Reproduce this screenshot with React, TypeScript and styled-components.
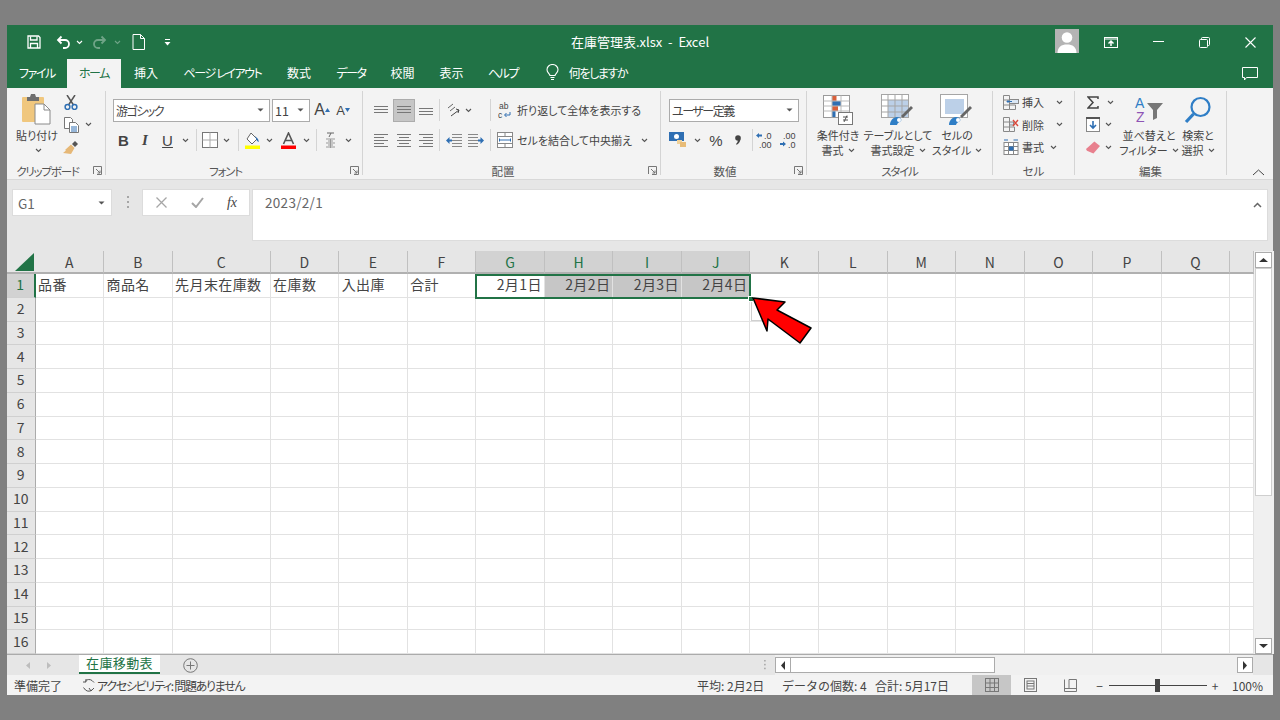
import React from 'react'
import styled, { createGlobalStyle } from 'styled-components'

const green = '#217346'
const JP = `"Noto Sans CJK JP", "Noto Sans", sans-serif`

const Global = createGlobalStyle`
  html, body { margin: 0; padding: 0; background: #808080; height: 100%; overflow: hidden; }
  body { font-family: ${JP}; }
  svg { flex: none; }
`

const Page = styled.div`
  width: 1280px;
  height: 720px;
  padding: 25px 7px;
  box-sizing: border-box;
`
const Window = styled.div`
  height: 670px;
  display: flex;
  flex-direction: column;
  background: #e6e6e6;
`

/* title bar */
const TitleBar = styled.div`
  height: 34px;
  background: ${green};
  display: flex;
  align-items: center;
  color: #fff;
  position: relative;
`
const Qat = styled.div`
  display: flex;
  align-items: center;
  padding-left: 17px;
`
const Slot = styled.div<{ $w: number; $mute?: boolean }>`
  width: ${p => p.$w}px;
  flex: none;
  height: 100%;
  display: flex;
  align-items: center;
  justify-content: center;
  opacity: ${p => (p.$mute ? 0.35 : 1)};
`
const Title = styled.div`
  position: absolute;
  left: 0;
  right: 0;
  top: 8px;
  text-align: center;
  font-size: 13px;
  line-height: 18px;
  white-space: pre;
`
const WinControls = styled.div`
  margin-left: auto;
  display: flex;
  align-items: center;
  height: 100%;
`
const Avatar = styled.div`
  width: 24px;
  height: 24px;
  background: #b4b4b4;
  margin-right: 8px;
  margin-top: -3px;
  overflow: hidden;
`

/* tabs */
const TabRow = styled.div`
  height: 29px;
  background: ${green};
  display: flex;
  align-items: stretch;
  color: #fff;
  font-size: 12px;
  font-feature-settings: "palt";
`
const Tab = styled.div<{ $w: number; $active?: boolean; $kana?: boolean }>`
  width: ${p => p.$w}px;
  flex: none;
  display: flex;
  align-items: center;
  justify-content: center;
  gap: 10px;
  padding-bottom: 2px;
  box-sizing: border-box;
  white-space: nowrap;
  letter-spacing: ${p => (p.$kana ? '-1.4px' : '0')};
  background: ${p => (p.$active ? '#f3f3f3' : 'transparent')};
  color: ${p => (p.$active ? green : '#fff')};
`
const Comment = styled.div`
  margin-left: auto;
  width: 46px;
  display: flex;
  align-items: center;
  justify-content: center;
`

/* ribbon */
const Ribbon = styled.div`
  height: 91px;
  background: #f3f3f3;
  display: flex;
  position: relative;
  color: #444;
  font-feature-settings: "palt";
`
const Group = styled.div<{ $w: number }>`
  width: ${p => p.$w}px;
  flex: none;
  display: flex;
  flex-direction: column;
`
const GroupBody = styled.div<{ $row?: boolean; $pad?: number }>`
  flex: 1;
  min-height: 0;
  display: flex;
  flex-direction: ${p => (p.$row ? 'row' : 'column')};
  padding-left: ${p => p.$pad ?? 0}px;
`
const GroupLabel = styled.div<{ $launch?: boolean; $kana?: boolean }>`
  height: 16px;
  font-size: 11.5px;
  line-height: 16px;
  text-align: center;
  color: #555;
  position: relative;
  white-space: nowrap;
  letter-spacing: ${p => (p.$kana ? '-1.2px' : '0')};
  padding-right: ${p => (p.$launch ? 17 : 0)}px;
`
const Launcher = styled.span`
  position: absolute;
  right: 3px;
  top: 3px;
  display: flex;
`
const Divider = styled.div`
  width: 1px;
  margin: 3px 0 4px;
  background: #d4d4d4;
  flex: none;
`
const TwoRows = styled.div`
  display: flex;
  flex-direction: column;
  padding-top: 11px;
  gap: 8px;
`
const Row = styled.div`
  display: flex;
  height: 22px;
  align-items: center;
`
const Field = styled.div<{ $w: number; $latin?: boolean }>`
  width: ${p => p.$w}px;
  height: 23px;
  box-sizing: border-box;
  background: #fff;
  border: 1px solid #ababab;
  flex: none;
  display: flex;
  align-items: center;
  justify-content: space-between;
  padding: 0 5px 0 2px;
  font-size: ${p => (p.$latin ? 12.5 : 12)}px;
  letter-spacing: ${p => (p.$latin ? '0' : '-1.5px')};
  color: #444;
  margin-right: 2px;
  white-space: nowrap;
`
const Sep = styled.div`
  width: 1px;
  height: 22px;
  background: #d4d4d4;
  flex: none;
`
const Active = styled.div`
  width: 22px;
  height: 23px;
  background: #c6c6c6;
  border: 1px solid #acacac;
  box-sizing: border-box;
  display: flex;
  align-items: center;
  justify-content: center;
`
const BtnText = styled.span<{ $w?: number }>`
  font-size: 11px;
  white-space: nowrap;
  color: #444;
  flex: none;
  width: ${p => (p.$w ? `${p.$w}px` : 'auto')};
`
const Face = styled.span<{ $b?: boolean; $i?: boolean; $u?: boolean; $size?: number; $sans?: boolean }>`
  font-family: ${p => (p.$sans ? '"Liberation Sans", sans-serif' : '"Liberation Serif", serif')};
  font-size: ${p => p.$size ?? 15}px;
  font-weight: ${p => (p.$b ? 700 : 400)};
  font-style: ${p => (p.$i ? 'italic' : 'normal')};
  text-decoration: ${p => (p.$u ? 'underline' : 'none')};
  color: #444;
`
const BigBtn = styled.div<{ $w: number }>`
  width: ${p => p.$w}px;
  flex: none;
  display: flex;
  flex-direction: column;
  align-items: center;
  padding-top: 5px;
  font-size: 11px;
  line-height: 15px;
  color: #444;
  text-align: center;
  white-space: nowrap;
`
const BigIcon = styled.div`
  height: 33px;
  margin-bottom: 2px;
  display: flex;
  align-items: center;
  justify-content: center;
`
const SecondLine = styled.span`
  height: 15px;
  display: inline-flex;
  align-items: center;
  gap: 4px;
`
const ChevLine = styled.span`
  height: 14px;
  display: flex;
  align-items: center;
  padding-left: 3px;
`
const SmallCol = styled.div`
  display: flex;
  flex-direction: column;
  padding-top: 3px;
`
const SmallRow = styled.div`
  display: flex;
  align-items: center;
  height: 22.5px;
`
const Collapse = styled.div`
  position: absolute;
  right: 8px;
  bottom: 3px;
  display: flex;
`

/* formula bar */
const FormulaBar = styled.div`
  height: 72px;
  box-sizing: border-box;
  padding: 9px 5px 10px 5px;
  display: flex;
  align-items: flex-start;
  background: #e6e6e6;
  border-top: 1px solid #d8d8d8;
`
const NameBox = styled.div`
  width: 100px;
  height: 27px;
  box-sizing: border-box;
  background: #fff;
  border: 1px solid #dcdcdc;
  display: flex;
  align-items: center;
  justify-content: space-between;
  padding: 0 6px 0 5px;
  font-size: 13.5px;
  color: #666;
`
const Dots = styled.div`
  width: 30px;
  height: 27px;
  display: flex;
  align-items: center;
  justify-content: center;
`
const FxBox = styled.div`
  width: 108px;
  height: 27px;
  box-sizing: border-box;
  background: #fff;
  border: 1px solid #dcdcdc;
  display: flex;
  margin-right: 2px;
`
const FormulaInput = styled.div`
  flex: 1;
  height: 52px;
  box-sizing: border-box;
  background: #fff;
  border: 1px solid #dcdcdc;
  padding: 3px 5px 0 12px;
  font-size: 13.5px;
  line-height: 18px;
  color: #666;
  display: flex;
  justify-content: space-between;
  letter-spacing: 0.3px;
`

/* sheet */
const SheetArea = styled.div`
  height: 403px;
  display: flex;
  background: #e6e6e6;
`
const GridWrap = styled.div`
  position: relative;
  width: 1247px;
  flex: none;
`
const Grid = styled.div`
  display: grid;
  grid-template-columns: 28.5px 68.56px 68.56px 98px repeat(14, 68.56px) 1fr;
  grid-template-rows: 23px repeat(16, 23.75px);
  background: #fff;
  font-size: 14px;
  color: #444;
`
const Corner = styled.div`
  background: #e6e6e6;
  border-bottom: 2px solid #b0b0b0;
  box-sizing: border-box;
  display: flex;
  align-items: flex-end;
  justify-content: flex-end;
  padding: 0 2px 1px 0;
`
const ColHead = styled.div<{ $sel?: boolean }>`
  background: ${p => (p.$sel ? '#d2d2d2' : '#e6e6e6')};
  color: ${p => (p.$sel ? green : '#444')};
  border-right: 1px solid #c0c0c0;
  border-bottom: 2px solid #b0b0b0;
  box-sizing: border-box;
  display: flex;
  align-items: center;
  justify-content: center;
  font-size: 14px;
`
const RowHead = styled.div<{ $sel?: boolean }>`
  background: ${p => (p.$sel ? '#d2d2d2' : '#e6e6e6')};
  color: ${p => (p.$sel ? green : '#444')};
  border-right: ${p => (p.$sel ? `2px solid ${green}` : '1px solid #ababab')};
  border-bottom: 1px solid #d0d0d0;
  box-sizing: border-box;
  display: flex;
  align-items: center;
  justify-content: center;
  font-size: 14px;
  padding-bottom: 2px;
`
const Cell = styled.div<{ $sel?: boolean; $right?: boolean }>`
  background: ${p => (p.$sel ? '#c6c6c6' : '#fff')};
  border-right: 1px solid #e2e2e2;
  border-bottom: 1px solid #e2e2e2;
  box-sizing: border-box;
  display: flex;
  align-items: center;
  justify-content: ${p => (p.$right ? 'flex-end' : 'flex-start')};
  padding: 0 2px 2px 2.5px;
  white-space: nowrap;
  letter-spacing: 0.4px;
  overflow: visible;
`
const Selection = styled.div`
  position: absolute;
  left: 468px;
  top: 23px;
  width: 276px;
  height: 25px;
  border: 2px solid ${green};
  box-sizing: border-box;
  pointer-events: none;
`
const Handle = styled.div`
  position: absolute;
  left: 741px;
  top: 45px;
  width: 6px;
  height: 6px;
  background: ${green};
  border: 1px solid #fff;
  box-sizing: border-box;
`
const QuickBtn = styled.div`
  position: absolute;
  left: 744px;
  top: 50px;
  width: 15px;
  height: 20px;
  background: #fff;
  border: 1px solid #d0d0d0;
  box-sizing: border-box;
`
const Arrow = styled.svg`
  position: absolute;
  left: 743px;
  top: 45px;
`
const VScroll = styled.div`
  flex: 1;
  display: flex;
  flex-direction: column;
  align-items: center;
  padding: 1px 2px 0 1px;
  background: #f0f0f0;
`
const ScrollBtn = styled.div<{ $w?: number; $h?: number }>`
  width: ${p => p.$w ?? 17}px;
  height: ${p => p.$h ?? 16}px;
  flex: none;
  background: #fff;
  border: 1px solid #ababab;
  box-sizing: border-box;
  display: flex;
  align-items: center;
  justify-content: center;
`
const VThumb = styled.div`
  width: 17px;
  height: 228px;
  flex: none;
  background: #fff;
  border: 1px solid #cfcfcf;
  box-sizing: border-box;
`
const VTrack = styled.div`
  flex: 1;
`

/* sheet tabs */
const TabBar = styled.div`
  height: 21px;
  background: #e6e6e6;
  display: flex;
  align-items: stretch;
  border-top: 1px solid #ababab;
  box-sizing: border-box;
`
const SheetTab = styled.div`
  width: 81px;
  height: 19px;
  flex: none;
  background: #fff;
  border-bottom: 2px solid ${green};
  box-sizing: border-box;
  color: ${green};
  font-size: 13px;
  line-height: 16px;
  text-align: center;
  letter-spacing: 0.4px;
`
const HScroll = styled.div`
  display: flex;
  align-items: center;
  width: 478px;
  flex: none;
  background: #f0f0f0;
  height: 100%;
`
const HThumb = styled.div`
  width: 204px;
  height: 16px;
  flex: none;
  background: #fff;
  border: 1px solid #ababab;
  border-left: none;
  box-sizing: border-box;
`
const HTrack = styled.div`
  flex: 1;
`

/* status bar */
const StatusBar = styled.div`
  height: 20px;
  background: #f3f3f3;
  display: flex;
  align-items: center;
  font-size: 12px;
  color: #444;
  white-space: nowrap;
`
const StatusText = styled.span<{ $w: number; $kana?: boolean }>`
  width: ${p => p.$w}px;
  flex: none;
  display: flex;
  align-items: center;
  font-feature-settings: ${p => (p.$kana ? '"palt"' : 'normal')};
  letter-spacing: ${p => (p.$kana ? '-1.3px' : '0')};
`
const ViewBtn = styled.div<{ $w: number; $active?: boolean }>`
  width: ${p => p.$w}px;
  height: 100%;
  flex: none;
  display: flex;
  align-items: center;
  justify-content: center;
  background: ${p => (p.$active ? '#c6c6c6' : 'transparent')};
`
const Slider = styled.div`
  width: 98px;
  height: 1px;
  background: #444;
  position: relative;
  flex: none;
`
const SliderThumb = styled.div`
  position: absolute;
  left: 46px;
  top: -6px;
  width: 5px;
  height: 13px;
  background: #444;
`

/* icons */
type IP = { c?: string; s?: number }
const Chev = ({ c = '#555' }: IP) => (
  <svg width="7" height="5" viewBox="0 0 7 5"><path d="M1 1l2.500 2.500L6 1" fill="none" stroke={c} strokeWidth="1.100" /></svg>
)
const Caret = ({ c = '#555' }: IP) => (
  <svg width="7" height="4" viewBox="0 0 7 4"><path d="M0.500 0.500h6L3.500 3.500z" fill={c} /></svg>
)
const LaunchIcon = () => (
  <svg width="9" height="9" viewBox="0 0 9 9" fill="none" stroke="#777"><path d="M.5 8V.5H8.500V8.500H4" /><path d="M3 3l4 4M7 4.500V7H4.500" /></svg>
)
const SaveIcon = () => (
  <svg width="14" height="14" viewBox="0 0 14 14" fill="none" stroke="#fff" strokeWidth="1.300"><path d="M1 1h10.500L13 2.500V13H1z" /><path d="M3.500 1.500v3.500h6.500V1.500M3.500 13V8.500h7V13" /></svg>
)
const UndoIcon = () => (
  <svg width="15" height="14" viewBox="0 0 15 14" fill="none" stroke="#fff" strokeWidth="1.800"><path d="M5.500 1.500L2 5l3.500 3.500" /><path d="M2.500 5H9a4 4 0 0 1 0 8H7" /></svg>
)
const RedoIcon = () => (
  <svg width="15" height="14" viewBox="0 0 15 14" fill="none" stroke="#fff" strokeWidth="1.800"><path d="M9.500 1.500L13 5 9.500 8.500" /><path d="M12.500 5H6a4 4 0 0 0 0 8h2" /></svg>
)
const NewIcon = () => (
  <svg width="13" height="16" viewBox="0 0 13 16" fill="none" stroke="#fff"><path d="M1 .5h7.500l4 4v11H1z" /><path d="M8.500.5v4h4" /></svg>
)
const QatMore = () => (
  <svg width="7" height="7" viewBox="0 0 7 7" fill="#fff"><rect x="1" width="5" height="1" /><path d="M.5 3h6L3.500 6.500z" /></svg>
)
const UserIcon = () => (
  <svg width="24" height="24" viewBox="0 0 24 24" fill="#fff"><circle cx="12" cy="8.500" r="5.300" /><path d="M2.500 24c0-6 4-8.500 9.500-8.500s9.500 2.500 9.500 8.500z" /></svg>
)
const DisplayIcon = () => (
  <svg width="14" height="11" viewBox="0 0 14 11" fill="none" stroke="#fff"><rect x=".5" y=".5" width="13" height="10" /><path d="M.5 2h13" /><path d="M7 9V4.500M4.500 6.500L7 4l2.500 2.500" strokeWidth="1.500" /></svg>
)
const MinIcon = () => (
  <svg width="11" height="2" viewBox="0 0 11 2"><rect width="11" height="1" fill="#fff" /></svg>
)
const RestoreIcon = () => (
  <svg width="11" height="11" viewBox="0 0 11 11" fill="none" stroke="#fff"><rect x=".5" y="2.500" width="8" height="8" rx="1" /><path d="M2.500 2.500V1.500a1 1 0 0 1 1-1h6a1 1 0 0 1 1 1v6a1 1 0 0 1-1 1h-1" /></svg>
)
const CloseIcon = () => (
  <svg width="11" height="11" viewBox="0 0 11 11" stroke="#fff" strokeWidth="1.100"><path d="M.5.5l10 10M10.500.5l-10 10" /></svg>
)
const BulbIcon = () => (
  <svg width="13" height="17" viewBox="0 0 13 17" fill="none" stroke="#fff" strokeWidth="1.100"><path d="M4 11.500C3.500 9.500 1 8.500 1 5.700a5.500 5.200 0 0 1 11 0c0 2.800-2.500 3.800-3 5.800z" /><path d="M4.500 13.500h4M5 15.500h3" /></svg>
)
const CommentIcon = () => (
  <svg width="16" height="14" viewBox="0 0 16 14" fill="none" stroke="#fff"><path d="M.5.500h15v10h-11l-2 2.500v-2.500h-2z" /></svg>
)
const PasteIcon = () => (
  <svg width="30" height="31" viewBox="0 0 30 31">
    <rect x="0" y="3" width="22" height="25" rx="1" fill="#f0c77e" />
    <path d="M5 3h3l1-3h4l1 3h3v4H5z" fill="#6f6f6f" />
    <path d="M13 10h9l6 6v14H13z" fill="#fff" stroke="#8a8a8a" />
    <path d="M22 10v6h6" fill="none" stroke="#8a8a8a" />
  </svg>
)
const ScissorsIcon = () => (
  <svg width="14" height="15" viewBox="0 0 14 15" fill="none">
    <path d="M3 0l6.500 10M11 0L4.500 10" stroke="#555" strokeWidth="1.500" />
    <circle cx="3.500" cy="12" r="2.400" stroke="#2f6fb3" strokeWidth="1.500" />
    <circle cx="10.500" cy="12" r="2.400" stroke="#2f6fb3" strokeWidth="1.500" />
  </svg>
)
const CopyIcon = () => (
  <svg width="15" height="16" viewBox="0 0 15 16" fill="#fff" stroke="#777">
    <path d="M.5.500h6l2 2v9h-8z" />
    <path d="M5.500 5.500h6l3 3v7h-9z" />
    <path d="M7 10h6M7 12h6M7 14h6" stroke="#2f6fb3" />
  </svg>
)
const BrushIcon = () => (
  <svg width="16" height="15" viewBox="0 0 16 15">
    <path d="M12 1l3 3-3 3-3-3z" fill="#555" />
    <path d="M8 4.500l3.500 3.500L8 14 0 13l3-2.500-1-.5z" fill="#e6b877" />
  </svg>
)
const BorderIcon = () => (
  <svg width="16" height="16" viewBox="0 0 16 16" fill="#fff" stroke="#777"><rect x=".5" y=".5" width="15" height="15" /><path d="M8 .5v15M.5 8h15" stroke="#aaa" /></svg>
)
const FillIcon = () => (
  <svg width="17" height="17" viewBox="0 0 17 17">
    <path d="M7 1l6 6-5 5-5-5z" fill="#fff" stroke="#666" />
    <path d="M11 4l3 3 1 3-2-1z" fill="#2f6fb3" />
    <rect x="1" y="13.500" width="15" height="3.500" fill="#ffff00" />
  </svg>
)
const FontColorIcon = () => (
  <svg width="17" height="17" viewBox="0 0 17 17">
    <path d="M3.500 12L8.500 1l5 11M5.500 8.500h6" fill="none" stroke="#555" strokeWidth="1.600" />
    <rect x="1" y="13.500" width="15" height="3.500" fill="#f00" />
  </svg>
)
const PhoneticIcon = () => (
  <svg width="11" height="17" viewBox="0 0 11 17" fill="none" stroke="#666">
    <path d="M2 1h7M6 1L4 5" /><path d="M1 7h9M1 11h9M1 15h9M3 9h5M3 13h5M5.500 7v9" stroke="#999" />
  </svg>
)
const Lines = ({ rows, w = 14 }: { rows: number[]; w?: number }) => (
  <svg width={w} height={Math.max(...rows) + 2} viewBox={`0 0 ${w} ${Math.max(...rows) + 2}`} stroke="#777">
    {rows.map(y => <path key={y} d={`M0 ${y + 0.5}h${w}`} />)}
  </svg>
)
const AlignLines = ({ inset = 'left' }: { inset?: 'left' | 'center' | 'right' }) => {
  const short = inset === 'left' ? 'M0 4.500h10M0 10.500h10' : inset === 'right' ? 'M4 4.500h10M4 10.500h10' : 'M2 4.500h10M2 10.500h10'
  return (
    <svg width="14" height="14" viewBox="0 0 14 14" stroke="#777"><path d="M0 1.500h14M0 7.500h14M0 13.500h14" /><path d={short} /></svg>
  )
}
const OrientIcon = () => (
  <svg width="14" height="14" viewBox="0 0 14 14" fill="none" stroke="#666"><path d="M1 5l5-4M3 8l5-4" /><path d="M4 13l8-6M9 6l3 1-1 3" stroke="#444" /></svg>
)
const IndentIcon = ({ dir }: { dir: 'in' | 'out' }) => (
  <svg width="16" height="14" viewBox="0 0 16 14">
    <path d={dir === 'out' ? 'M6 1.500h10M6 4.500h10M6 7.500h10M6 10.500h10M6 13.500h10' : 'M0 1.500h10M0 4.500h10M0 7.500h10M0 10.500h10M0 13.500h10'} stroke="#888" />
    <path d={dir === 'out' ? 'M0 7.500L3.500 4v2.500H6v2H3.500V11z' : 'M16 7.500L12.500 4v2.500H10v2h2.500V11z'} fill="#2f6fb3" />
  </svg>
)
const WrapIcon = () => (
  <svg width="14" height="17" viewBox="0 0 14 17">
    <text x="1" y="7" fontSize="8.500" fontFamily="Liberation Sans" fill="#444">ab</text>
    <text x="0" y="15.500" fontSize="8.500" fontFamily="Liberation Sans" fill="#444">c</text>
    <path d="M12 10v3H7M8.500 11L6.500 13l2 2" fill="none" stroke="#2f6fb3" />
  </svg>
)
const MergeIcon = () => (
  <svg width="16" height="16" viewBox="0 0 16 16" fill="#fff" stroke="#888">
    <rect x=".5" y=".5" width="15" height="15" />
    <path d="M.5 4.500h15M.5 11.500h15M8 .5v4M8 11.500v4" />
    <path d="M3 8h10" stroke="#2f6fb3" />
    <path d="M2.500 6.500v3M13.500 6.500v3" stroke="#2f6fb3" />
  </svg>
)
const CurrencyIcon = () => (
  <svg width="18" height="16" viewBox="0 0 18 16">
    <rect x="0" y="0" width="15" height="9" fill="#2f6fb3" />
    <circle cx="7.500" cy="4.500" r="2.500" fill="#fff" />
    <rect x="8" y="8" width="5" height="4" fill="#f0d29a" />
    <rect x="11" y="10" width="6" height="5" fill="#e8bc78" />
  </svg>
)
const CommaIcon = () => (
  <svg width="6" height="10" viewBox="0 0 6 10"><circle cx="3" cy="3" r="2.800" fill="#444" /><path d="M5.500 3.500C5.500 6.500 3.500 9 1.500 9.800L1 9c1-.8 1.800-2 1.800-3.500z" fill="#444" /></svg>
)
const DecIcon = ({ more }: { more?: boolean }) => (
  <svg width="20" height="17" viewBox="0 0 20 17" fontFamily="Liberation Sans" fontSize="9" fill="#444">
    {more ? (
      <>
        <path d="M0 3.500L3 1v1.500h3v2H3V6z" fill="#2f6fb3" />
        <text x="8" y="7">.0</text>
        <text x="3" y="15.500">.00</text>
      </>
    ) : (
      <>
        <text x="4" y="7">.00</text>
        <path d="M7 12L4 9.500V11H1v2h3v1.500z" fill="#2f6fb3" />
        <text x="9" y="15.500">.0</text>
      </>
    )}
  </svg>
)
const CondIcon = () => (
  <svg width="30" height="30" viewBox="0 0 30 30">
    <g fill="#fff" stroke="#9a9a9a"><rect x=".5" y=".5" width="26" height="22" /></g>
    <rect x="9" y="1" width="4.500" height="5" fill="#d9603b" />
    <rect x="9" y="6" width="9" height="5" fill="#2f6fb3" />
    <rect x="9" y="11" width="6" height="5" fill="#d9603b" />
    <rect x="9" y="16" width="3.500" height="6" fill="#2f6fb3" />
    <path d="M.5 6h26M.5 11h26M.5 16h26M9 .5v22M18 .5v22" stroke="#bbb" fill="none" />
    <rect x="15.500" y="17.500" width="14" height="12" fill="#fff" stroke="#777" />
    <path d="M20 22h5M20 25h5M24 20.500l-3 6.500" stroke="#555" fill="none" />
  </svg>
)
const StyleBrush = () => (
  <>
    <path d="M20 22L30 12l2 2-10 10z" fill="#666" />
    <path d="M9 31c0-4 3-8 7-8s5 3 4 4-3 1-4 4z" fill="#2f7ec6" />
    <circle cx="18" cy="26" r="2" fill="#fff" />
  </>
)
const TableIcon = () => (
  <svg width="34" height="32" viewBox="0 0 34 32">
    <rect x=".5" y=".5" width="27" height="23" fill="#fff" stroke="#a5a5a5" />
    <rect x="7" y="6" width="20" height="17" fill="#bcd0e8" />
    <path d="M.5 6h27M.5 12h27M.5 18h27M7 .5v23M14 .5v23M21 .5v23" stroke="#a5a5a5" fill="none" />
    <StyleBrush />
  </svg>
)
const CellStyleIcon = () => (
  <svg width="34" height="32" viewBox="0 0 34 32">
    <rect x=".5" y=".5" width="27" height="23" fill="#fff" stroke="#a5a5a5" />
    <rect x="5" y="5" width="19" height="15" fill="#bcd0e8" />
    <StyleBrush />
  </svg>
)
const CellInsert = () => (
  <svg width="16" height="15" viewBox="0 0 16 15" fill="none" stroke="#888">
    <path d="M.5.5h6v14h-6zM.5 5h6M.5 10h6M6.500 10h6v4.500h-6" />
    <rect x="6.500" y="4.500" width="9" height="4" fill="#dbe7f4" />
    <path d="M9 6.500H4M5.500 5L4 6.500 5.500 8" stroke="#2f6fb3" />
  </svg>
)
const CellDelete = () => (
  <svg width="16" height="15" viewBox="0 0 16 15" fill="none" stroke="#888">
    <path d="M.5.5h6v14h-6zM.5 5h6M.5 10h6M6.500 10h5v4.500h-5" />
    <rect x="6.500" y="5" width="4" height="3" fill="#dbe7f4" />
    <path d="M10 3l5 6M15 3l-5 6" stroke="#d9483b" strokeWidth="1.400" />
  </svg>
)
const CellFormat = () => (
  <svg width="16" height="16" viewBox="0 0 16 16" fill="none" stroke="#888">
    <rect x="1" y="3.500" width="14" height="12" fill="#fff" />
    <path d="M1 7.500h14M1 11.500h14M5.500 3.500v12M10.500 3.500v12" />
    <rect x="6" y="7.500" width="4.500" height="4" fill="#2f6fb3" stroke="none" />
    <path d="M1 1h4M10.500 1H15" stroke="#2f6fb3" />
  </svg>
)
const SigmaIcon = () => (
  <svg width="12" height="13" viewBox="0 0 12 13"><path d="M11 3V1H1l5 5.500L1 12h10v-2" fill="none" stroke="#444" strokeWidth="1.500" /></svg>
)
const FillDown = () => (
  <svg width="14" height="15" viewBox="0 0 14 15">
    <rect x=".5" y=".5" width="13" height="14" fill="#fff" stroke="#888" />
    <rect x="0" y="0" width="14" height="2" fill="#555" />
    <path d="M7 4v7M4 8l3 3 3-3" fill="none" stroke="#2f6fb3" strokeWidth="1.600" />
  </svg>
)
const EraserIcon = () => (
  <svg width="14" height="13" viewBox="0 0 15 13"><path d="M9 0l6 5-7 8-7-3-1-2z" fill="#e8808e" /></svg>
)
const SortIcon = () => (
  <svg width="29" height="27" viewBox="0 0 29 27" fontFamily="Liberation Sans" fontSize="14" overflow="visible">
    <text x="0" y="12" fill="#2f7ec6">A</text>
    <text x="1" y="26" fill="#8e54b5">Z</text>
    <path d="M12 7h16l-6 7v8l-4 2V14z" fill="#777" />
  </svg>
)
const FindIcon = () => (
  <svg width="28" height="28" viewBox="0 0 28 28" fill="none" stroke="#2f7ec6">
    <circle cx="16.500" cy="11" r="9" strokeWidth="2.200" />
    <path d="M9.500 18L2 26" strokeWidth="3.200" />
  </svg>
)
const CollapseIcon = () => (
  <svg width="13" height="7" viewBox="0 0 13 7"><path d="M1 6l5.500-5L12 6" fill="none" stroke="#444" /></svg>
)
const CrossIcon = () => (
  <svg width="11" height="11" viewBox="0 0 11 11" stroke="#a6a6a6" strokeWidth="1.300"><path d="M.5.5l10 10M10.500.5l-10 10" /></svg>
)
const CheckIcon = () => (
  <svg width="13" height="11" viewBox="0 0 13 11" fill="none" stroke="#a6a6a6" strokeWidth="2"><path d="M1 6l4 4 7-9" /></svg>
)
const VDots = ({ s = 13 }: IP) => (
  <svg width="3" height={s} viewBox="0 0 3 13" fill="#a6a6a6"><rect x="1" width="2" height="2" /><rect x="1" y="5" width="2" height="2" /><rect x="1" y="10" width="2" height="2" /></svg>
)
const ScrollTri = ({ d }: { d: 'up' | 'down' | 'left' | 'right' }) => {
  const paths = { up: 'M0 5h9L4.500 1z', down: 'M0 1h9L4.500 5z', left: 'M5 0v9L1 4.500z', right: 'M1 0v9l4-4.500z' }
  const v = d === 'up' || d === 'down'
  return (
    <svg width={v ? 9 : 6} height={v ? 6 : 9} viewBox={v ? '0 0 9 6' : '0 0 6 9'}><path d={paths[d]} fill="#333" /></svg>
  )
}
const SmallTri = ({ right }: { right?: boolean }) => (
  <svg width="5" height="7" viewBox="0 0 5 7"><path d={right ? 'M1 0v7l4-3.500z' : 'M4 0v7L0 3.500z'} fill="#bdbdbd" /></svg>
)
const PlusCircle = () => (
  <svg width="15" height="15" viewBox="0 0 15 15" fill="none" stroke="#777"><circle cx="7.500" cy="7.500" r="6.800" /><path d="M7.500 3.500v8M3.500 7.500h8" /></svg>
)
const AccessIcon = () => (
  <svg width="15" height="15" viewBox="0 0 15 15" fill="none" stroke="#555"><path d="M4 3.500a5 5 0 0 1 7-1l2 2M11.500 11.500a5 5 0 0 1-7 .5l-2-2.500" /><path d="M5 1v3H2M8 10l2 3 3-3" /></svg>
)
const NormalView = () => (
  <svg width="14" height="14" viewBox="0 0 14 14" fill="none" stroke="#777"><rect x=".5" y=".5" width="13" height="13" /><path d="M5 .5v13M9.500.5v13M.5 5h13M.5 9.500h13" /></svg>
)
const PageView = () => (
  <svg width="13" height="14" viewBox="0 0 13 14" fill="none" stroke="#777"><rect x=".5" y=".5" width="12" height="13" /><rect x="3" y="3" width="7" height="8" /><path d="M3 5.500h7M3 8h7" /></svg>
)
const BreakView = () => (
  <svg width="13" height="13" viewBox="0 0 13 13" fill="none" stroke="#777"><path d="M.5.500v12h12V.500M.5 9.500h12M5 .5v9M5 .5h7.500" /></svg>
)

const cols = ['A', 'B', 'C', 'D', 'E', 'F', 'G', 'H', 'I', 'J', 'K', 'L', 'M', 'N', 'O', 'P', 'Q', '']
const firstRow: Record<string, string> = {
  A: '品番', B: '商品名', C: '先月末在庫数', D: '在庫数', E: '入出庫', F: '合計',
  G: '2月1日', H: '2月2日', I: '2月3日', J: '2月4日',
}
const selectedCols = ['G', 'H', 'I', 'J']
const rows = Array.from({ length: 16 }, (_, i) => i + 1)

const Sheet = () => (
  <GridWrap>
    <Grid>
      <Corner>
        <svg width="19" height="18" viewBox="0 0 19 18"><path d="M19 0v18H0z" fill={green} /></svg>
      </Corner>
      {cols.map(c => <ColHead key={c} $sel={selectedCols.includes(c)}>{c}</ColHead>)}
      {rows.map(r => (
        <React.Fragment key={r}>
          <RowHead $sel={r === 1}>{r}</RowHead>
          {cols.map(c => (
            <Cell
              key={c}
              $sel={r === 1 && ['H', 'I', 'J'].includes(c)}
              $right={r === 1 && selectedCols.includes(c)}
            >
              {r === 1 ? firstRow[c] : ''}
            </Cell>
          ))}
        </React.Fragment>
      ))}
    </Grid>
    <QuickBtn />
    <Selection />
    <Handle />
    <Arrow width="70" height="52" viewBox="0 0 70 52">
      <path d="M3 2L35 6 27 14 61 32 50 47 18 23 17 35z" fill="#f00" stroke="#000" strokeWidth="1.500" strokeLinejoin="round" />
    </Arrow>
  </GridWrap>
)

const App = () => (
  <Page>
    <Global />
    <Window>
      <TitleBar>
        <Title>{'在庫管理表.xlsx  -  Excel'}</Title>
        <Qat>
          <Slot $w={20}><SaveIcon /></Slot>
          <Slot $w={12} />
          <Slot $w={14}><UndoIcon /></Slot>
          <Slot $w={18}><Chev c="#fff" /></Slot>
          <Slot $w={22} $mute><RedoIcon /></Slot>
          <Slot $w={14} $mute><Chev c="#fff" /></Slot>
          <Slot $w={28}><NewIcon /></Slot>
          <Slot $w={30}><QatMore /></Slot>
        </Qat>
        <WinControls>
          <Avatar><UserIcon /></Avatar>
          <Slot $w={48}><DisplayIcon /></Slot>
          <Slot $w={46}><MinIcon /></Slot>
          <Slot $w={46}><RestoreIcon /></Slot>
          <Slot $w={46}><CloseIcon /></Slot>
        </WinControls>
      </TitleBar>

      <TabRow>
        <Tab $w={60} $kana>ファイル</Tab>
        <Tab $w={54} $active $kana>ホーム</Tab>
        <Tab $w={50}>挿入</Tab>
        <Tab $w={103} $kana>ページ レイアウト</Tab>
        <Tab $w={50}>数式</Tab>
        <Tab $w={54} $kana>データ</Tab>
        <Tab $w={49}>校閲</Tab>
        <Tab $w={49}>表示</Tab>
        <Tab $w={54} $kana>ヘルプ</Tab>
        <Tab $w={113} $kana><BulbIcon />何をしますか</Tab>
        <Comment><CommentIcon /></Comment>
      </TabRow>

      <Ribbon>
        <Group $w={98}>
          <GroupBody $row>
            <BigBtn $w={60}>
              <BigIcon><PasteIcon /></BigIcon>
              貼り付け
              <ChevLine><Chev /></ChevLine>
            </BigBtn>
            <SmallCol>
              <SmallRow><Slot $w={8}><ScissorsIcon /></Slot></SmallRow>
              <SmallRow><Slot $w={8}><CopyIcon /></Slot><Slot $w={26}><Chev /></Slot></SmallRow>
              <SmallRow><Slot $w={8}><BrushIcon /></Slot></SmallRow>
            </SmallCol>
          </GroupBody>
          <GroupLabel $launch $kana>クリップボード<Launcher><LaunchIcon /></Launcher></GroupLabel>
        </Group>
        <Divider />
        <Group $w={256}>
          <GroupBody $pad={7}>
            <TwoRows>
              <Row>
                <Field $w={157}>游ゴシック<Caret /></Field>
                <Field $w={38} $latin>11<Caret /></Field>
                <Slot $w={20}><Face $size={16} $sans>A</Face><svg width="5" height="4"><path d="M0 4h5L2.500 0z" fill="#2f6fb3" /></svg></Slot>
                <Slot $w={22}><Face $size={13} $sans>A</Face><svg width="5" height="4"><path d="M0 0h5L2.500 4z" fill="#2f6fb3" /></svg></Slot>
              </Row>
              <Row>
                <Slot $w={21}><Face $b $sans>B</Face></Slot>
                <Slot $w={22}><Face $i $b>I</Face></Slot>
                <Slot $w={23}><Face $u $sans>U</Face></Slot>
                <Slot $w={13}><Chev /></Slot>
                <Slot $w={8}><Sep /></Slot>
                <Slot $w={19}><BorderIcon /></Slot>
                <Slot $w={15}><Chev /></Slot>
                <Slot $w={8}><Sep /></Slot>
                <Slot $w={20}><FillIcon /></Slot>
                <Slot $w={14}><Chev /></Slot>
                <Slot $w={24}><FontColorIcon /></Slot>
                <Slot $w={12}><Chev /></Slot>
                <Slot $w={8}><Sep /></Slot>
                <Slot $w={20}><PhoneticIcon /></Slot>
                <Slot $w={16}><Chev /></Slot>
              </Row>
            </TwoRows>
          </GroupBody>
          <GroupLabel $launch $kana>フォント<Launcher><LaunchIcon /></Launcher></GroupLabel>
        </Group>
        <Divider />
        <Group $w={297}>
          <GroupBody $pad={6}>
            <TwoRows>
              <Row>
                <Slot $w={24}><Lines rows={[0, 3, 6]} /></Slot>
                <Active><Lines rows={[0, 3, 6]} /></Active>
                <Slot $w={22}><Lines rows={[4, 7, 10]} /></Slot>
                <Slot $w={4}><Sep /></Slot>
                <Slot $w={25}><OrientIcon /></Slot>
                <Slot $w={4}><Chev /></Slot>
                <Slot $w={20} />
                <Sep />
                <Slot $w={7} />
                <Slot $w={14}><WrapIcon /></Slot>
                <Slot $w={5} />
                <BtnText $w={126}>折り返して全体を表示する</BtnText>
              </Row>
              <Row>
                <Slot $w={24}><AlignLines /></Slot>
                <Slot $w={22}><AlignLines inset="center" /></Slot>
                <Slot $w={22}><AlignLines inset="right" /></Slot>
                <Slot $w={4}><Sep /></Slot>
                <Slot $w={25}><IndentIcon dir="out" /></Slot>
                <Slot $w={19}><IndentIcon dir="in" /></Slot>
                <Slot $w={5} />
                <Sep />
                <Slot $w={7} />
                <Slot $w={14}><MergeIcon /></Slot>
                <Slot $w={5} />
                <BtnText $w={117}>セルを結合して中央揃え</BtnText>
                <Slot $w={20}><Chev /></Slot>
              </Row>
            </TwoRows>
          </GroupBody>
          <GroupLabel $launch>配置<Launcher><LaunchIcon /></Launcher></GroupLabel>
        </Group>
        <Divider />
        <Group $w={145}>
          <GroupBody $pad={8}>
            <TwoRows>
              <Row><Field $w={130}>ユーザー定義<Caret /></Field></Row>
              <Row>
                <Slot $w={18}><CurrencyIcon /></Slot>
                <Slot $w={20}><Chev /></Slot>
                <Slot $w={18}><Face $size={15} $sans>%</Face></Slot>
                <Slot $w={26}><CommaIcon /></Slot>
                <Slot $w={3}><Sep /></Slot>
                <Slot $w={24}><DecIcon more /></Slot>
                <Slot $w={22}><DecIcon /></Slot>
              </Row>
            </TwoRows>
          </GroupBody>
          <GroupLabel $launch>数値<Launcher><LaunchIcon /></Launcher></GroupLabel>
        </Group>
        <Divider />
        <Group $w={185}>
          <GroupBody $row $pad={2}>
            <BigBtn $w={58}>
              <BigIcon><CondIcon /></BigIcon>
              条件付き
              <SecondLine>書式<Chev /></SecondLine>
            </BigBtn>
            <BigBtn $w={62}>
              <BigIcon><TableIcon /></BigIcon>
              テーブルとして
              <SecondLine>書式設定<Chev /></SecondLine>
            </BigBtn>
            <BigBtn $w={56}>
              <BigIcon><CellStyleIcon /></BigIcon>
              セルの
              <SecondLine>スタイル<Chev /></SecondLine>
            </BigBtn>
          </GroupBody>
          <GroupLabel $kana>スタイル</GroupLabel>
        </Group>
        <Divider />
        <Group $w={81}>
          <GroupBody>
            <SmallCol>
              <SmallRow><Slot $w={10} /><Slot $w={16}><CellInsert /></Slot><Slot $w={3} /><BtnText $w={30}>挿入</BtnText><Slot $w={14}><Chev /></Slot></SmallRow>
              <SmallRow><Slot $w={10} /><Slot $w={16}><CellDelete /></Slot><Slot $w={3} /><BtnText $w={30}>削除</BtnText><Slot $w={14}><Chev /></Slot></SmallRow>
              <SmallRow><Slot $w={10} /><Slot $w={16}><CellFormat /></Slot><Slot $w={3} /><BtnText $w={24}>書式</BtnText><Slot $w={14}><Chev /></Slot></SmallRow>
            </SmallCol>
          </GroupBody>
          <GroupLabel>セル</GroupLabel>
        </Group>
        <Divider />
        <Group $w={151}>
          <GroupBody $row>
            <SmallCol>
              <SmallRow><Slot $w={10} /><Slot $w={16}><SigmaIcon /></Slot><Slot $w={18}><Chev /></Slot></SmallRow>
              <SmallRow><Slot $w={10} /><Slot $w={16}><FillDown /></Slot><Slot $w={14}><Chev /></Slot></SmallRow>
              <SmallRow><Slot $w={10} /><Slot $w={16}><EraserIcon /></Slot><Slot $w={14}><Chev /></Slot></SmallRow>
            </SmallCol>
            <BigBtn $w={60}>
              <BigIcon><SortIcon /></BigIcon>
              並べ替えと
              <SecondLine>フィルター<Chev /></SecondLine>
            </BigBtn>
            <BigBtn $w={38}>
              <BigIcon><FindIcon /></BigIcon>
              検索と
              <SecondLine>選択<Chev /></SecondLine>
            </BigBtn>
          </GroupBody>
          <GroupLabel>編集</GroupLabel>
        </Group>
        <Divider />
        <Collapse><CollapseIcon /></Collapse>
      </Ribbon>

      <FormulaBar>
        <NameBox>G1<Caret /></NameBox>
        <Dots><VDots /></Dots>
        <FxBox>
          <Slot $w={36}><CrossIcon /></Slot>
          <Slot $w={36}><CheckIcon /></Slot>
          <Slot $w={34}><Face $i $size={14}>fx</Face></Slot>
        </FxBox>
        <FormulaInput>
          2023/2/1
          <span><svg width="9" height="6" viewBox="0 0 9 6"><path d="M1 5l3.500-3.500L8 5" fill="none" stroke="#666" strokeWidth="1.500" /></svg></span>
        </FormulaInput>
      </FormulaBar>

      <SheetArea>
        <Sheet />
        <VScroll>
          <ScrollBtn><ScrollTri d="up" /></ScrollBtn>
          <VThumb />
          <VTrack />
          <ScrollBtn><ScrollTri d="down" /></ScrollBtn>
        </VScroll>
      </SheetArea>

      <TabBar>
        <Slot $w={14} />
        <Slot $w={14}><SmallTri /></Slot>
        <Slot $w={26}><SmallTri right /></Slot>
        <Slot $w={18} />
        <SheetTab>在庫移動表</SheetTab>
        <Slot $w={61}><PlusCircle /></Slot>
        <Slot $w={532} />
        <Slot $w={22}><VDots s={10} /></Slot>
        <HScroll>
          <ScrollBtn $w={16} $h={16}><ScrollTri d="left" /></ScrollBtn>
          <HThumb />
          <HTrack />
          <ScrollBtn $w={16} $h={16}><ScrollTri d="right" /></ScrollBtn>
        </HScroll>
      </TabBar>

      <StatusBar>
        <Slot $w={7} />
        <StatusText $w={66}>準備完了</StatusText>
        <Slot $w={17}><AccessIcon /></Slot>
        <StatusText $w={600} $kana>アクセシビリティ: 問題ありません</StatusText>
        <StatusText $w={85}>平均: 2月2日</StatusText>
        <StatusText $w={93}>データの個数: 4</StatusText>
        <StatusText $w={97}>合計: 5月17日</StatusText>
        <ViewBtn $w={39} $active><NormalView /></ViewBtn>
        <ViewBtn $w={39}><PageView /></ViewBtn>
        <ViewBtn $w={40}><BreakView /></ViewBtn>
        <Slot $w={19}>−</Slot>
        <Slider><SliderThumb /></Slider>
        <Slot $w={16}>+</Slot>
        <Slot $w={9} />
        <StatusText $w={33}>100%</StatusText>
      </StatusBar>
    </Window>
  </Page>
)

export default App
